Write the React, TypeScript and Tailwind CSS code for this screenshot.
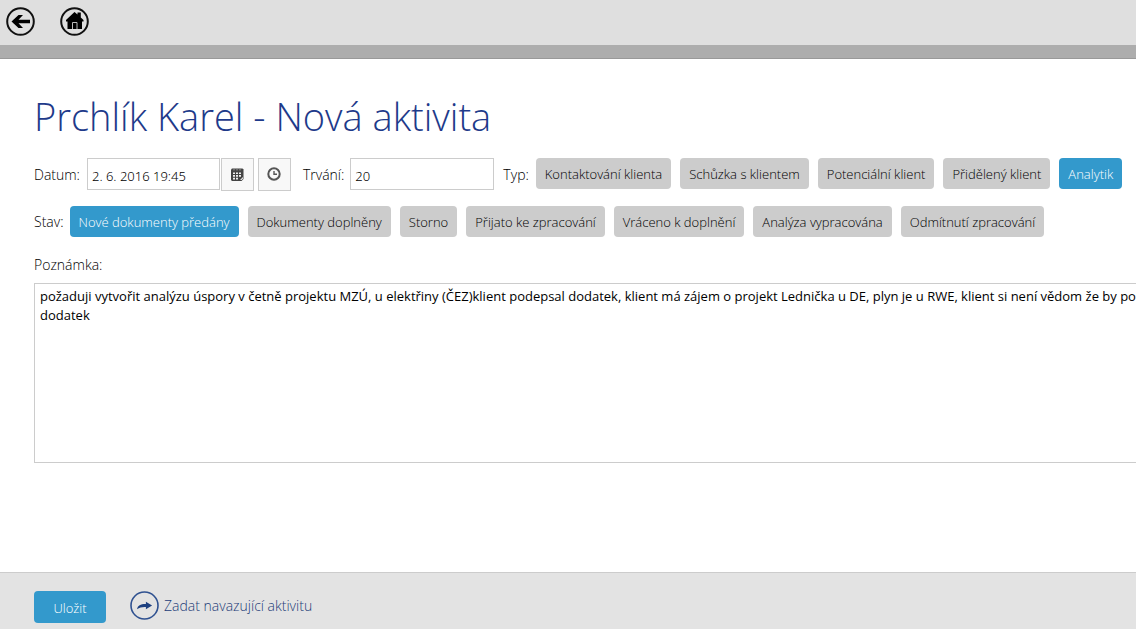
import { useState } from "react";

const ACTIVITY_TYPES = [
  "Kontaktování klienta",
  "Schůzka s klientem",
  "Potenciální klient",
  "Přidělený klient",
  "Analytik",
];

const STATES = [
  "Nové dokumenty předány",
  "Dokumenty doplněny",
  "Storno",
  "Přijato ke zpracování",
  "Vráceno k doplnění",
  "Analýza vypracována",
  "Odmítnutí zpracování",
];

const DEFAULT_NOTE =
  "požaduji vytvořit analýzu úspory v četně projektu MZÚ, u elektřiny (ČEZ)klient podepsal dodatek, klient má zájem o projekt Lednička u DE, plyn je u RWE, klient si není vědom že by podepsal dodatek";

function BackIcon() {
  return (
    <svg width="30" height="30" viewBox="0 0 30 30" fill="none" aria-hidden="true">
      <circle cx="14.5" cy="15.5" r="13.3" stroke="#111" strokeWidth="2" />
      <path d="M5.5 15.500 12.500 9H17l-4.500 4.800H24v3.400H12.500L17 22h-4.500z" fill="#000" />
    </svg>
  );
}

function HomeIcon() {
  return (
    <svg width="30" height="30" viewBox="0 0 30 30" fill="none" aria-hidden="true">
      <circle cx="14.5" cy="15.5" r="13.3" stroke="#111" strokeWidth="2" />
      <path d="M14.500 6 17.500 8.500V6.500H20.800v5L23.500 14v1.500H22V23H7.500v-7.500H6V14z" fill="#000" />
      <path d="M12.500 23v-6.500h4.500V23" stroke="#bbb" strokeWidth="1" />
    </svg>
  );
}

function CalendarIcon() {
  return (
    <svg width="15" height="15" viewBox="0 0 15 15" aria-hidden="true">
      <path d="M2 1.5h10.500l1 1V12l-2 2H2l-1-1V2.500z" fill="#444" />
      <path d="M3 5.500h2v1.600H3zM6 5.500h2v1.600H6zM9 5.500h2v1.600H9zM3 8h2v1.800H3zM6 8h2v1.800H6zM9 8h2v1.800H9zM3 10.800h2v1.700H3zM6 10.800h2v1.700H6zM10 13l3-3v1.600L11.600 13z" fill="#eee" />
      <path d="M4 1v2.500M7 1v2.500M10 1v2.500" stroke="#999" strokeWidth="1" />
    </svg>
  );
}

function ClockIcon() {
  return (
    <svg width="15" height="15" viewBox="0 0 15 15" fill="none" stroke="#555" aria-hidden="true">
      <circle cx="7" cy="7" r="5.700" strokeWidth="2" />
      <path d="M7 4v3.200h3" strokeWidth="1.400" />
    </svg>
  );
}

function ForwardIcon() {
  return (
    <svg width="30" height="30" viewBox="0 0 30 30" fill="none" aria-hidden="true">
      <circle cx="14.5" cy="14.5" r="13.500" stroke="#2f5190" strokeWidth="1.600" />
      <path d="M7 18.200c.8-3.600 3.600-5.200 8.900-5.100v-2.300l6.200 3.700-6.200 3.800v-2.300c-3.600-.2-6.200.4-8.900 2.200z" fill="#1d4080" />
    </svg>
  );
}

type ChoiceProps = {
  label: string;
  selected: boolean;
  onSelect: () => void;
};

function Choice({ label, selected, onSelect }: ChoiceProps) {
  return (
    <button
      type="button"
      aria-pressed={selected}
      onClick={onSelect}
      className={
        "h-[31px] shrink-0 cursor-pointer whitespace-nowrap rounded px-[9px] pt-px text-[13px] leading-5 " +
        (selected ? "bg-[#3399cc] text-white" : "bg-[#cccccc] text-black")
      }
    >
      {label}
    </button>
  );
}

export default function App() {
  const [date, setDate] = useState("2. 6. 2016 19:45");
  const [duration, setDuration] = useState("20");
  const [type, setType] = useState("Analytik");
  const [state, setState] = useState("Nové dokumenty předány");
  const [note, setNote] = useState(DEFAULT_NOTE);

  return (
    <div className="flex min-h-screen flex-col overflow-hidden bg-white font-['Open_Sans','Noto_Sans',sans-serif] text-sm font-light text-black">
      <header className="flex h-[59px] items-start gap-6 border-b border-[#999] bg-[linear-gradient(#dfdfdf_45px,#adadad_45px)] px-[6px] pt-[6px]">
        <button type="button" aria-label="Zpět" className="cursor-pointer">
          <BackIcon />
        </button>
        <button type="button" aria-label="Domů" className="cursor-pointer">
          <HomeIcon />
        </button>
      </header>

      <main className="flex-1 pl-[34px] pt-8">
        <h1 className="whitespace-nowrap text-[38px] leading-[50px] text-[#1e3a8a]">Prchlík Karel - Nová aktivita</h1>

        <div className="mt-[17px] flex items-start">
          <label htmlFor="date" className="mr-[7px] leading-[34px]">Datum:</label>
          <input
            id="date"
            value={date}
            onChange={(e) => setDate(e.target.value)}
            className="h-8 w-[133px] border border-[#ccc] px-1 pt-1 font-['Noto_Sans',sans-serif] text-[13px] outline-none"
          />
          <button type="button" aria-label="Vybrat datum" className="ml-px flex size-[33px] cursor-pointer items-center justify-center border border-[#ccc] bg-[#f8f8f8]">
            <CalendarIcon />
          </button>
          <button type="button" aria-label="Vybrat čas" className="ml-1 flex size-[33px] cursor-pointer items-center justify-center border border-[#ccc] bg-[#f8f8f8]">
            <ClockIcon />
          </button>
          <label htmlFor="duration" className="ml-3 mr-[6px] leading-[34px]">Trvání:</label>
          <input
            id="duration"
            value={duration}
            onChange={(e) => setDuration(e.target.value)}
            className="h-8 w-36 border border-[#ccc] px-1 pt-1 font-['Noto_Sans',sans-serif] text-[13px] outline-none"
          />
          <span id="type-label" className="ml-[9px] mr-[7px] leading-[34px]">Typ:</span>
          <div role="group" aria-labelledby="type-label" className="flex gap-[9px]">
            {ACTIVITY_TYPES.map((item) => (
              <Choice key={item} label={item} selected={item === type} onSelect={() => setType(item)} />
            ))}
          </div>
        </div>

        <div className="mt-[14px] flex items-start">
          <span id="state-label" className="mr-[6px] leading-8">Stav:</span>
          <div role="group" aria-labelledby="state-label" className="flex gap-[9px]">
            {STATES.map((item) => (
              <Choice key={item} label={item} selected={item === state} onSelect={() => setState(item)} />
            ))}
          </div>
        </div>

        <label htmlFor="note" className="mt-[15px] block leading-6">Poznámka:</label>
        <div className="-mr-20">
          <textarea
            id="note"
            value={note}
            onChange={(e) => setNote(e.target.value)}
            className="mt-[6px] block h-[180px] w-full resize-none border border-[#ccc] px-[5px] py-[3px] text-[13px] font-normal leading-[19px] outline-none"
          />
        </div>
      </main>

      <footer className="flex h-[57px] items-start border-t border-[#ccc] bg-[#e3e3e3] pl-[34px] pt-[18px]">
        <button type="button" className="h-8 w-[72px] cursor-pointer rounded bg-[#3399cc] pt-0.5 text-[13px] text-white">
          Uložit
        </button>
        <a href="#navazujici" className="ml-6 flex items-center gap-1 text-[#1d3c78]">
          <ForwardIcon />
          Zadat navazující aktivitu
        </a>
      </footer>
    </div>
  );
}
